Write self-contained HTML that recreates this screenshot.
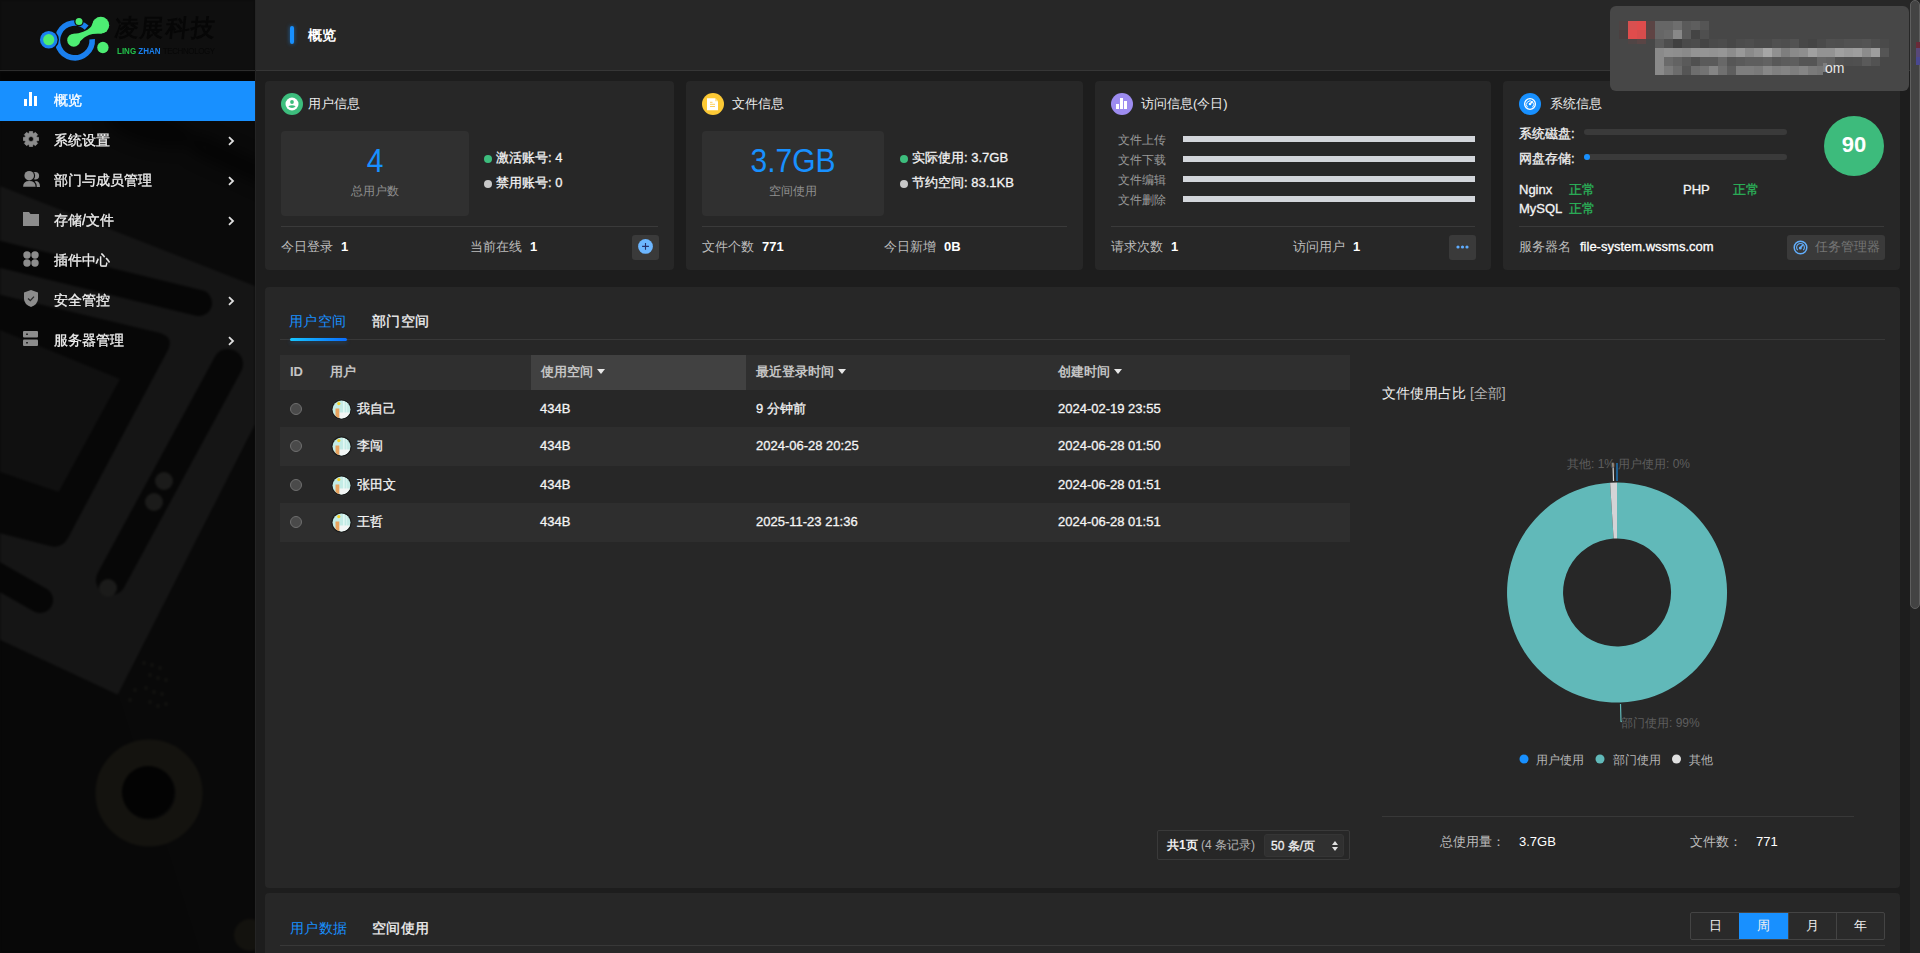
<!DOCTYPE html>
<html><head><meta charset="utf-8">
<style>
*{box-sizing:border-box;margin:0;padding:0}
html,body{width:1920px;height:953px;overflow:hidden}
body{background:#1d1d1d;font-family:"Liberation Sans",sans-serif;color:#e6e6e6;position:relative}
.a{position:absolute;white-space:nowrap}
#side{position:absolute;left:0;top:0;width:255px;height:953px;background:#0b0b0b;overflow:hidden}
#sideline{position:absolute;left:255px;top:0;width:1px;height:953px;background:#242424}
.mi{position:absolute;left:0;width:255px;height:40px}
.mi .t{position:absolute;left:54px;top:9px;font-size:14px;line-height:20px;color:#f0f0f0;-webkit-text-stroke-width:0.3px}
.mi .ic{position:absolute;left:23px;top:12px;width:16px;height:16px}
.mi .ch{position:absolute;left:226px;top:15px;width:10px;height:10px}
#hdr{position:absolute;left:256px;top:0;width:1664px;height:71px;background:#272727;border-bottom:1px solid #363636}
.card{position:absolute;top:81px;height:189px;background:#272727;border-radius:4px}
.panel{position:absolute;left:265px;width:1635px;background:#272727;border-radius:4px}
.ttl{position:absolute;top:13px;font-size:13px;line-height:20px;color:#ececec}
.circ{position:absolute;top:12px;width:22px;height:22px;border-radius:50%}
.stat{position:absolute;top:50px;height:85px;background:#303030;border-radius:4px}
.big{position:absolute;left:0;right:0;text-align:center;font-size:30px;line-height:36px;color:#1890ff;transform:scaleY(1.11);transform-origin:50% 28px}
.sub{position:absolute;left:0;right:0;text-align:center;font-size:12px;line-height:16px;color:#8f8f8f}
.div{position:absolute;top:145px;height:1px;background:#3a3a3a}
.ft{position:absolute;top:156px;font-size:13px;line-height:20px;color:#bdbdbd}
.ft b{color:#fff;font-weight:bold;margin-left:8px}
.dot{display:inline-block;width:8px;height:8px;border-radius:50%;margin-left:1px;margin-right:4px;vertical-align:-1px}
.kv{position:absolute;font-size:13px;line-height:20px;color:#f4f4f4;-webkit-text-stroke-width:0.3px}
.btn{position:absolute;top:154px;width:27px;height:25px;background:#3a3a3a;border-radius:3px}
.tx{top:9px;font-size:13px;line-height:20px;color:#f4f4f4;-webkit-text-stroke-width:0.3px}
.th{top:7px;font-size:13px;line-height:20px;color:#c4c4c4;font-weight:bold}
.tri{display:inline-block;width:0;height:0;border-left:4px solid transparent;border-right:4px solid transparent;border-top:5px solid #e8e8e8;margin-left:4px;vertical-align:2px}
.seg{top:0;height:26px;font-size:13px;line-height:26px;text-align:center;color:#f0f0f0}
</style></head><body>

<div id="side">
  <svg class="a" style="left:0;top:0" width="255" height="953" viewBox="0 0 255 953"><defs><filter id="bl" x="-5%" y="-5%" width="110%" height="110%" color-interpolation-filters="sRGB"><feGaussianBlur stdDeviation="1.2" color-interpolation-filters="sRGB"/></filter><filter id="bl2" x="-50%" y="-50%" width="200%" height="200%" color-interpolation-filters="sRGB"><feGaussianBlur stdDeviation="7"/></filter></defs><g filter="url(#bl)">
<rect x="0" y="0" width="255" height="953" fill="#0a0a0a"/>
<rect x="0" y="0" width="255" height="71" fill="#0f0f0f"/><rect x="0" y="71" width="255" height="12" fill="#050505"/>
<g filter="url(#bl2)"><ellipse cx="150" cy="128" rx="45" ry="16" fill="#050505" transform="rotate(15 150 128)"/><line x1="200" y1="145" x2="275" y2="180" stroke="#050505" stroke-width="22" stroke-linecap="round"/></g><polygon points="0,186 255,286 255,425 118,695 0,640" fill="#151515"/>
<line x1="-30" y1="247" x2="199" y2="303" stroke="#060606" stroke-width="26" stroke-linecap="round"/>
<path d="M-20 290 L160 333 Q174 337 168 350 L68 538 Q62 549 50 546 L-20 528 Z" fill="#070707"/>
<polygon points="0,330 120,379 58.6,492 0,472" fill="#101010"/>
<line x1="228" y1="364" x2="111" y2="580" stroke="#070707" stroke-width="30" stroke-linecap="round"/>
<circle cx="164" cy="481" r="9" fill="#1b1b1a"/>
<circle cx="154" cy="502" r="9" fill="#1b1b1a"/>
<circle cx="108" cy="588" r="9" fill="#1b1b1a"/>
<line x1="-30" y1="560" x2="40" y2="600" stroke="#060606" stroke-width="26" stroke-linecap="round"/>
<polygon points="0,640 118,695 255,425 255,953 0,953" fill="#080808"/><polygon points="118,695 255,425 255,953 200,953" fill="#090909"/>

<circle cx="149" cy="793" r="40" fill="none" stroke="#14130f" stroke-width="27"/>
<circle cx="148" cy="792" r="26" fill="#030303"/>
<circle cx="250" cy="935" r="16" fill="#13120e"/>
<circle cx="144" cy="663" r="2" fill="#121210"/><circle cx="152" cy="665" r="2" fill="#121210"/><circle cx="160" cy="668" r="2" fill="#121210"/><circle cx="150" cy="675" r="2" fill="#121210"/><circle cx="158" cy="678" r="2" fill="#121210"/><circle cx="166" cy="680" r="2" fill="#121210"/><circle cx="135" cy="690" r="2" fill="#121210"/><circle cx="146" cy="688" r="2" fill="#121210"/><circle cx="154" cy="692" r="2" fill="#121210"/><circle cx="162" cy="694" r="2" fill="#121210"/><circle cx="130" cy="700" r="2" fill="#121210"/><circle cx="150" cy="702" r="2" fill="#121210"/><circle cx="158" cy="706" r="2" fill="#121210"/><circle cx="166" cy="704" r="2" fill="#121210"/></g></svg>
  <!-- logo -->
  <svg class="a" style="left:30px;top:10px" width="100" height="60" viewBox="0 0 100 60">
    <path d="M 56.67 17.67 A 17.4 17.4 0 1 0 62.16 29.19" fill="none" stroke="#1a80ef" stroke-width="5.6"/>
    <circle cx="18.75" cy="29.7" r="10.2" fill="#0f0f0f"/>
    <circle cx="18.75" cy="29.7" r="8.8" fill="#1a80ef"/>
    <circle cx="18.75" cy="29.7" r="5.6" fill="#4ded73"/>
    <circle cx="49" cy="11.5" r="4.8" fill="#0f0f0f"/>
    <circle cx="49" cy="11.5" r="3.5" fill="#4ded73"/>
    <path d="M 43.75 23.7 C 50 23.5, 57 21, 61 16.7 C 62.5 14.5, 63 12, 64 10 L 72 23.6 C 66 23.5, 60 24, 56 26.4 C 53 28, 51.5 30, 49.5 32 Z" fill="#4ded73"/>
    <circle cx="70.8" cy="15.2" r="8.4" fill="#4ded73"/>
    <circle cx="43.75" cy="30.2" r="6.5" fill="#4ded73"/>
    <circle cx="72.9" cy="37.5" r="5.7" fill="#4ded73"/>
  </svg>
  <div class="a" style="left:115px;top:14px;font-size:24px;line-height:28px;font-weight:900;color:#060606;letter-spacing:1.2px;transform:skewX(-6deg)">凌展科技</div>
  <div class="a" style="left:117px;top:46px;font-size:8px;line-height:10px;transform:scaleY(1.12);transform-origin:0 0"><b style="color:#22c04a">LING</b> <b style="color:#1a80ef">ZHAN</b> <span style="color:#070707;letter-spacing:-0.4px">TECHNOLOGY</span></div>
  <div class="a" style="left:0;top:70px;width:255px;height:1px;background:#2c2c2c"></div>

  <div class="mi" style="top:81px;background:#1890ff">
    <svg class="ic" viewBox="0 0 16 16" style="top:10px"><rect x="1" y="8" width="3" height="7" fill="#fff"/><rect x="6" y="1" width="3" height="14" fill="#fff"/><rect x="11" y="5" width="3" height="10" fill="#fff"/></svg>
    <div class="t" style="color:#fff">概览</div>
  </div>
  <div class="mi" style="top:121px">
    <svg class="ic" viewBox="0 0 16 16" style="top:10px"><path fill="#8c8c8c" fill-rule="evenodd" stroke="#8c8c8c" stroke-width="0.6" stroke-linejoin="round" d="M5.95 2.36 L6.47 0.15 L9.53 0.15 L10.05 2.36 L10.54 2.56 L12.47 1.37 L14.63 3.53 L13.44 5.46 L13.64 5.95 L15.85 6.47 L15.85 9.53 L13.64 10.05 L13.44 10.54 L14.63 12.47 L12.47 14.63 L10.54 13.44 L10.05 13.64 L9.53 15.85 L6.47 15.85 L5.95 13.64 L5.46 13.44 L3.53 14.63 L1.37 12.47 L2.56 10.54 L2.36 10.05 L0.15 9.53 L0.15 6.47 L2.36 5.95 L2.56 5.46 L1.37 3.53 L3.53 1.37 L5.46 2.56Z M8 5.5 A2.5 2.5 0 1 0 8 10.5 A2.5 2.5 0 1 0 8 5.5Z"/></svg>
    <div class="t">系统设置</div>
    <svg class="ch" viewBox="0 0 10 10"><path d="M3 1.2 L7 5 L3 8.8" fill="none" stroke="#e0e0e0" stroke-width="1.8"/></svg>
  </div>
  <div class="mi" style="top:161px">
    <svg class="ic" viewBox="0 0 17 17" style="top:9px;width:17px;height:17px"><circle cx="12.3" cy="5.7" r="3.8" fill="#8c8c8c"/><path d="M10 17 Q10 11 13 11 Q17 11.5 17 17z" fill="#8c8c8c"/><circle cx="6.2" cy="5.7" r="5.9" fill="#0b0b0b"/><path d="M-1 17.5 Q-1 9.5 6.4 9.5 Q13.8 9.5 13.8 17.5z" fill="#0b0b0b"/><circle cx="6.2" cy="5.7" r="4.8" fill="#8c8c8c"/><path d="M0.1 16.8 Q0.1 10.9 6.35 10.9 Q12.6 10.9 12.6 16.8z" fill="#8c8c8c"/></svg>
    <div class="t">部门与成员管理</div>
    <svg class="ch" viewBox="0 0 10 10"><path d="M3 1.2 L7 5 L3 8.8" fill="none" stroke="#e0e0e0" stroke-width="1.8"/></svg>
  </div>
  <div class="mi" style="top:201px">
    <svg class="ic" viewBox="0 0 16 16" style="top:11px"><path d="M0 0 H6 L7.5 2 H16 V14 H0z" fill="#8c8c8c"/></svg>
    <div class="t">存储/文件</div>
    <svg class="ch" viewBox="0 0 10 10"><path d="M3 1.2 L7 5 L3 8.8" fill="none" stroke="#e0e0e0" stroke-width="1.8"/></svg>
  </div>
  <div class="mi" style="top:241px">
    <svg class="ic" viewBox="0 0 16 16" style="top:10px"><circle cx="4" cy="4" r="3.7" fill="#8c8c8c"/><circle cx="12" cy="4" r="3.7" fill="#8c8c8c"/><circle cx="4" cy="12" r="3.7" fill="#8c8c8c"/><circle cx="12" cy="12" r="3.7" fill="#8c8c8c"/></svg>
    <div class="t">插件中心</div>
  </div>
  <div class="mi" style="top:281px">
    <svg class="ic" viewBox="0 0 16 17" style="top:9px;height:17px"><path d="M1 2.5 L8 0 L15 2.5 V9 Q15 14 8 17 Q1 14 1 9z" fill="#8c8c8c"/><path d="M5 8.5 L7.3 10.6 L11 6.6" fill="none" stroke="#2a2a2a" stroke-width="1.3"/></svg>
    <div class="t">安全管控</div>
    <svg class="ch" viewBox="0 0 10 10"><path d="M3 1.2 L7 5 L3 8.8" fill="none" stroke="#e0e0e0" stroke-width="1.8"/></svg>
  </div>
  <div class="mi" style="top:321px">
    <svg class="ic" viewBox="0 0 15 15" style="top:10px;width:15px;height:15px"><rect x="0" y="0" width="15" height="6.5" rx="1" fill="#8c8c8c"/><rect x="0" y="8.5" width="15" height="6.5" rx="1" fill="#8c8c8c"/><rect x="3" y="2.5" width="2" height="1.5" fill="#2a2a2a"/><rect x="3" y="11" width="2" height="1.5" fill="#2a2a2a"/></svg>
    <div class="t">服务器管理</div>
    <svg class="ch" viewBox="0 0 10 10"><path d="M3 1.2 L7 5 L3 8.8" fill="none" stroke="#e0e0e0" stroke-width="1.8"/></svg>
  </div>
</div>
<div id="sideline"></div>

<!-- header -->
<div id="hdr">
  <div class="a" style="left:34px;top:26px;width:4px;height:18px;border-radius:2px;background:#1890ff;box-shadow:0 0 4px rgba(24,144,255,.6)"></div>
  <div class="a" style="left:52px;top:25px;font-size:14px;line-height:20px;color:#fff;font-weight:bold">概览</div>
</div>

<!-- CARDS -->

<div class="card" style="left:265px;width:409px">
  <div class="circ" style="left:16px;background:#3dbd7d">
    <svg width="22" height="22" viewBox="0 0 22 22"><circle cx="11" cy="11" r="6.5" fill="#fff"/><circle cx="11" cy="9" r="1.9" fill="#3dbd7d"/><path d="M7.3 13.3 Q11 11 14.7 13.3 Q13.5 15 11 15 Q8.5 15 7.3 13.3z" fill="#3dbd7d"/></svg>
  </div>
  <div class="ttl" style="left:43px">用户信息</div>
  <div class="stat" style="left:16px;width:188px">
    <div class="big" style="top:13px">4</div>
    <div class="sub" style="top:52px">总用户数</div>
  </div>
  <div class="kv" style="left:218px;top:67px"><span class="dot" style="background:#3dbd7d"></span>激活账号: 4</div>
  <div class="kv" style="left:218px;top:92px"><span class="dot" style="background:#c8c8c8"></span>禁用账号: 0</div>
  <div class="div" style="left:16px;width:377px"></div>
  <div class="ft" style="left:16px">今日登录<b>1</b></div>
  <div class="ft" style="left:205px">当前在线<b>1</b></div>
  <div class="btn" style="left:367px"><svg width="27" height="25" viewBox="0 0 27 25"><circle cx="13.5" cy="11.4" r="7.4" fill="#6cb6ff"/><path d="M13.5 8v6.8M10.1 11.4h6.8" stroke="#26306a" stroke-width="1.1"/></svg></div>
</div>

<div class="card" style="left:686px;width:397px">
  <div class="circ" style="left:16px;background:#fcc935">
    <svg width="22" height="22" viewBox="0 0 22 22"><path d="M5 5.3h8l3 3v9h-11z" fill="#fff"/><path d="M13 5.3v3h3" fill="#fde7a0"/><path d="M8 9.3h2.5M8 11.3h5M8 13.5h5" stroke="#fcd060" stroke-width="1"/></svg>
  </div>
  <div class="ttl" style="left:46px">文件信息</div>
  <div class="stat" style="left:16px;width:182px">
    <div class="big" style="top:13px">3.7GB</div>
    <div class="sub" style="top:52px">空间使用</div>
  </div>
  <div class="kv" style="left:213px;top:67px"><span class="dot" style="background:#3dbd7d"></span>实际使用: 3.7GB</div>
  <div class="kv" style="left:213px;top:92px"><span class="dot" style="background:#c8c8c8"></span>节约空间: 83.1KB</div>
  <div class="div" style="left:16px;width:365px"></div>
  <div class="ft" style="left:16px">文件个数<b>771</b></div>
  <div class="ft" style="left:198px">今日新增<b>0B</b></div>
</div>

<div class="card" style="left:1095px;width:396px">
  <div class="circ" style="left:16px;background:#9d8cf0">
    <svg width="22" height="22" viewBox="0 0 22 22"><rect x="5" y="11" width="3" height="5" fill="#fff"/><rect x="9" y="5" width="3" height="11" fill="#fff"/><rect x="13" y="8" width="3" height="8" fill="#fff"/></svg>
  </div>
  <div class="ttl" style="left:46px">访问信息(今日)</div>
  <div class="a" style="left:23px;top:49px;font-size:12px;line-height:20px;color:#9a9a9a">文件上传</div>
  <div class="a" style="left:23px;top:69px;font-size:12px;line-height:20px;color:#9a9a9a">文件下载</div>
  <div class="a" style="left:23px;top:89px;font-size:12px;line-height:20px;color:#9a9a9a">文件编辑</div>
  <div class="a" style="left:23px;top:109px;font-size:12px;line-height:20px;color:#9a9a9a">文件删除</div>
  <div class="a" style="left:88px;top:55px;width:292px;height:6px;background:#d3d6db"></div>
  <div class="a" style="left:88px;top:75px;width:292px;height:6px;background:#d3d6db"></div>
  <div class="a" style="left:88px;top:95px;width:292px;height:6px;background:#d3d6db"></div>
  <div class="a" style="left:88px;top:115px;width:292px;height:6px;background:#d3d6db"></div>
  <div class="div" style="left:16px;width:364px"></div>
  <div class="ft" style="left:16px">请求次数<b>1</b></div>
  <div class="ft" style="left:198px">访问用户<b>1</b></div>
  <div class="btn" style="left:354px"><svg width="27" height="25" viewBox="0 0 27 25"><circle cx="9" cy="12" r="1.6" fill="#5eacff"/><circle cx="13.5" cy="12" r="1.6" fill="#5eacff"/><circle cx="18" cy="12" r="1.6" fill="#5eacff"/></svg></div>
</div>

<div class="card" style="left:1503px;width:397px">
  <div class="circ" style="left:16px;background:#1890ff">
    <svg width="22" height="22" viewBox="0 0 22 22"><circle cx="11" cy="11" r="5.4" fill="none" stroke="#fff" stroke-width="1.3"/><path d="M8.6 14.2 A3.6 3.6 0 1 1 13.4 14.2" fill="none" stroke="#fff" stroke-width="0.9"/><path d="M11 11 L13.6 8.2" stroke="#fff" stroke-width="1.5"/><circle cx="11" cy="11" r="1.3" fill="#fff"/></svg>
  </div>
  <div class="ttl" style="left:47px">系统信息</div>
  <div class="kv" style="left:16px;top:43px;color:#f2f2f2">系统磁盘:</div>
  <div class="kv" style="left:16px;top:68px;color:#f2f2f2">网盘存储:</div>
  <div class="a" style="left:81px;top:48px;width:203px;height:6px;border-radius:3px;background:#3a3a3a"></div>
  <div class="a" style="left:81px;top:73px;width:203px;height:6px;border-radius:3px;background:#3a3a3a"></div>
  <div class="a" style="left:81px;top:73px;width:6px;height:6px;border-radius:3px;background:#1890ff"></div>
  <div class="a" style="left:321px;top:35px;width:60px;height:60px;border-radius:50%;background:#3dbb7c;color:#fff;font-weight:bold;font-size:22px;line-height:58px;text-align:center">90</div>
  <div class="kv" style="left:16px;top:99px">Nginx</div><div class="kv" style="left:66px;top:99px;color:#2bb45a">正常</div>
  <div class="kv" style="left:180px;top:99px">PHP</div><div class="kv" style="left:230px;top:99px;color:#2bb45a">正常</div>
  <div class="kv" style="left:16px;top:118px">MySQL</div><div class="kv" style="left:66px;top:118px;color:#2bb45a">正常</div>
  <div class="div" style="left:16px;width:365px"></div>
  <div class="ft" style="left:16px">服务器名<b style="margin-left:9px;font-weight:normal;-webkit-text-stroke-width:0.3px">file-system.wssms.com</b></div>
  <div class="a" style="left:284px;top:154px;width:98px;height:25px;background:#3a3a3a;border-radius:3px">
    <svg class="a" style="left:5px;top:4px" width="17" height="17" viewBox="0 0 17 17"><circle cx="8.5" cy="8.5" r="6.3" fill="none" stroke="#62aefc" stroke-width="1.5"/><path d="M5.8 11.2 A3.9 3.9 0 1 1 11.2 11.2" fill="none" stroke="#62aefc" stroke-width="1.1"/><path d="M8.3 8.8 L10.8 6" stroke="#62aefc" stroke-width="1.5"/><circle cx="8.3" cy="8.9" r="1.5" fill="#62aefc"/></svg>
    <div class="a" style="left:28px;top:2px;font-size:13px;line-height:20px;color:#757575">任务管理器</div>
  </div>
</div>


<!-- PANEL 2 -->
<div class="panel" style="top:287px;height:601px" id="p2">
  <div class="a" style="left:24px;top:24px;font-size:14px;line-height:20px;color:#1890ff;letter-spacing:0.4px">用户空间</div>
  <div class="a" style="left:107px;top:24px;font-size:14px;line-height:20px;color:#f4f4f4;letter-spacing:0.4px;-webkit-text-stroke-width:0.3px">部门空间</div>
  <div class="a" style="left:15px;top:52px;width:1605px;height:1px;background:#383838"></div>
  <div class="a" style="left:25px;top:51px;width:57px;height:3px;border-radius:2px;background:linear-gradient(90deg,#17c6ff,#0a6dff);box-shadow:0 2px 4px rgba(24,144,255,.25)"></div>
  <div class="a" style="left:15px;top:68px;width:1070px;height:35px;background:#2f2f2f">
    <div class="a" style="left:251px;top:0;width:215px;height:35px;background:#414141"></div>
    <div class="a th" style="left:10px">ID</div>
    <div class="a th" style="left:50px">用户</div>
    <div class="a th" style="left:261px">使用空间<i class="tri"></i></div>
    <div class="a th" style="left:476px">最近登录时间<i class="tri"></i></div>
    <div class="a th" style="left:778px">创建时间<i class="tri"></i></div>
  </div>
  <div class="a" style="left:15px;top:103px;width:1070px;height:37px;background:#272727">
    <div class="a" style="left:10px;top:13px;width:12px;height:12px;border-radius:50%;background:#4a4a4a;border:1px solid #6e6e6e"></div>
    <svg class="a" style="left:50px;top:7.5px" width="23" height="23" viewBox="0 0 23 23"><defs><clipPath id="av0"><circle cx="11.5" cy="11.5" r="9"/></clipPath></defs><circle cx="11.5" cy="11.5" r="10.6" fill="#1b1b1b" stroke="#323232" stroke-width="0.6"/><g clip-path="url(#av0)"><rect x="2" y="2" width="19" height="19" fill="#c4ece6"/><rect x="13" y="2" width="1.6" height="19" fill="#e2f7f3"/><rect x="16" y="2" width="1.2" height="19" fill="#d8f3ef"/><rect x="9.3" y="14.5" width="12" height="8" fill="#f3f6f5"/><rect x="5.5" y="10.5" width="3.8" height="10" fill="#e8a35f"/><circle cx="8.8" cy="5.6" r="1.6" fill="#f5d327"/></g></svg>
    <div class="a tx" style="left:77px">我自己</div>
    <div class="a tx" style="left:260px">434B</div>
    <div class="a tx" style="left:476px">9 分钟前</div>
    <div class="a tx" style="left:778px">2024-02-19 23:55</div>
  </div><div class="a" style="left:15px;top:140px;width:1070px;height:39px;background:#2e2e2e">
    <div class="a" style="left:10px;top:13px;width:12px;height:12px;border-radius:50%;background:#4a4a4a;border:1px solid #6e6e6e"></div>
    <svg class="a" style="left:50px;top:7.5px" width="23" height="23" viewBox="0 0 23 23"><defs><clipPath id="av1"><circle cx="11.5" cy="11.5" r="9"/></clipPath></defs><circle cx="11.5" cy="11.5" r="10.6" fill="#1b1b1b" stroke="#323232" stroke-width="0.6"/><g clip-path="url(#av1)"><rect x="2" y="2" width="19" height="19" fill="#c4ece6"/><rect x="13" y="2" width="1.6" height="19" fill="#e2f7f3"/><rect x="16" y="2" width="1.2" height="19" fill="#d8f3ef"/><rect x="9.3" y="14.5" width="12" height="8" fill="#f3f6f5"/><rect x="5.5" y="10.5" width="3.8" height="10" fill="#e8a35f"/><circle cx="8.8" cy="5.6" r="1.6" fill="#f5d327"/></g></svg>
    <div class="a tx" style="left:77px">李闯</div>
    <div class="a tx" style="left:260px">434B</div>
    <div class="a tx" style="left:476px">2024-06-28 20:25</div>
    <div class="a tx" style="left:778px">2024-06-28 01:50</div>
  </div><div class="a" style="left:15px;top:179px;width:1070px;height:37px;background:#272727">
    <div class="a" style="left:10px;top:13px;width:12px;height:12px;border-radius:50%;background:#4a4a4a;border:1px solid #6e6e6e"></div>
    <svg class="a" style="left:50px;top:7.5px" width="23" height="23" viewBox="0 0 23 23"><defs><clipPath id="av2"><circle cx="11.5" cy="11.5" r="9"/></clipPath></defs><circle cx="11.5" cy="11.5" r="10.6" fill="#1b1b1b" stroke="#323232" stroke-width="0.6"/><g clip-path="url(#av2)"><rect x="2" y="2" width="19" height="19" fill="#c4ece6"/><rect x="13" y="2" width="1.6" height="19" fill="#e2f7f3"/><rect x="16" y="2" width="1.2" height="19" fill="#d8f3ef"/><rect x="9.3" y="14.5" width="12" height="8" fill="#f3f6f5"/><rect x="5.5" y="10.5" width="3.8" height="10" fill="#e8a35f"/><circle cx="8.8" cy="5.6" r="1.6" fill="#f5d327"/></g></svg>
    <div class="a tx" style="left:77px">张田文</div>
    <div class="a tx" style="left:260px">434B</div>
    <div class="a tx" style="left:476px"></div>
    <div class="a tx" style="left:778px">2024-06-28 01:51</div>
  </div><div class="a" style="left:15px;top:216px;width:1070px;height:39px;background:#2e2e2e">
    <div class="a" style="left:10px;top:13px;width:12px;height:12px;border-radius:50%;background:#4a4a4a;border:1px solid #6e6e6e"></div>
    <svg class="a" style="left:50px;top:7.5px" width="23" height="23" viewBox="0 0 23 23"><defs><clipPath id="av3"><circle cx="11.5" cy="11.5" r="9"/></clipPath></defs><circle cx="11.5" cy="11.5" r="10.6" fill="#1b1b1b" stroke="#323232" stroke-width="0.6"/><g clip-path="url(#av3)"><rect x="2" y="2" width="19" height="19" fill="#c4ece6"/><rect x="13" y="2" width="1.6" height="19" fill="#e2f7f3"/><rect x="16" y="2" width="1.2" height="19" fill="#d8f3ef"/><rect x="9.3" y="14.5" width="12" height="8" fill="#f3f6f5"/><rect x="5.5" y="10.5" width="3.8" height="10" fill="#e8a35f"/><circle cx="8.8" cy="5.6" r="1.6" fill="#f5d327"/></g></svg>
    <div class="a tx" style="left:77px">王哲</div>
    <div class="a tx" style="left:260px">434B</div>
    <div class="a tx" style="left:476px">2025-11-23 21:36</div>
    <div class="a tx" style="left:778px">2024-06-28 01:51</div>
  </div>
  <div class="a" style="left:892px;top:543px;width:193px;height:30px;border:1px solid #3a3a3a;border-radius:2px">
    <div class="a" style="left:9px;top:4px;font-size:12px;line-height:20px;color:#f0f0f0"><b>共1页</b> <span style="color:#b5b5b5">(4 条记录)</span></div>
    <div class="a" style="left:106px;top:3px;width:80px;height:23px;background:#303030;border:1px solid #353535;border-radius:3px">
      <div class="a" style="left:6px;top:1px;font-size:12px;line-height:20px;color:#f0f0f0;-webkit-text-stroke-width:0.3px">50 条/页</div>
      <svg class="a" style="left:66px;top:5px" width="8" height="12" viewBox="0 0 8 12"><path d="M4 1 L7 5 H1z M4 11 L7 7 H1z" fill="#e0e0e0"/></svg>
    </div>
  </div>

  <div class="a" style="left:1117px;top:96px;font-size:14px;line-height:20px;color:#f0f0f0">文件使用占比 <span style="color:#b0b0b0">[全部]</span></div>
  <svg class="a" style="left:1117px;top:160px" width="500" height="360" viewBox="1382 447 500 360" id="donut"><path d="M1617.00 482.50 A110 110 0 1 1 1610.09 482.72 L1613.61 538.61 A54 54 0 1 0 1617.00 538.50Z" fill="#61b9b9"/><path d="M1610.09 482.72 A110 110 0 0 1 1617.00 482.50 L1617.00 538.50 A54 54 0 0 0 1613.61 538.61Z" fill="#d3d3d6"/><path d="M1617 481 V463" stroke="#1a86d8" stroke-width="1.2"/><path d="M1613.5 481 L1613 463" stroke="#d8d8d8" stroke-width="1.2"/><path d="M1620.5 704 L1621 721.5 H1622" stroke="#61b9b9" stroke-width="1.2" fill="none"/><text x="1567" y="468" font-size="12" fill="#5e5e5e" font-family="Liberation Sans">其他: 1%</text><text x="1618" y="468" font-size="12" fill="#5e5e5e" font-family="Liberation Sans">用户使用: 0%</text><text x="1621" y="727" font-size="12" fill="#5e5e5e" font-family="Liberation Sans">部门使用: 99%</text><circle cx="1524" cy="759" r="4.5" fill="#1890ff"/><text x="1536" y="764" font-size="12" fill="#b5b5b5" font-family="Liberation Sans">用户使用</text><circle cx="1600" cy="759" r="4.5" fill="#61b9b9"/><text x="1612.5" y="764" font-size="12" fill="#b5b5b5" font-family="Liberation Sans">部门使用</text><circle cx="1676.5" cy="759" r="4.5" fill="#e0e0e0"/><text x="1689" y="764" font-size="12" fill="#b5b5b5" font-family="Liberation Sans">其他</text></svg>
  <div class="a" style="left:1117px;top:529px;width:472px;height:1px;background:#383838"></div>
  <div class="a" style="left:1175px;top:545px;font-size:13px;line-height:20px;color:#bdbdbd">总使用量：</div>
  <div class="a" style="left:1254px;top:545px;font-size:13px;line-height:20px;color:#fff">3.7GB</div>
  <div class="a" style="left:1425px;top:545px;font-size:13px;line-height:20px;color:#bdbdbd">文件数：</div>
  <div class="a" style="left:1491px;top:545px;font-size:13px;line-height:20px;color:#fff">771</div>
</div>

<!-- PANEL 3 -->
<div class="panel" style="top:893px;height:80px" id="p3">
  <div class="a" style="left:25px;top:25px;font-size:14px;line-height:20px;color:#1890ff;letter-spacing:0.4px">用户数据</div>
  <div class="a" style="left:107px;top:25px;font-size:14px;line-height:20px;color:#f4f4f4;letter-spacing:0.4px;-webkit-text-stroke-width:0.3px">空间使用</div>
  <div class="a" style="left:15px;top:52px;width:1605px;height:1px;background:#383838"></div>
  <div class="a" style="left:1425px;top:19px;width:195px;height:28px;border:1px solid #444;border-radius:2px;background:#2a2a2a">
    <div class="a seg" style="left:0;width:48px">日</div>
    <div class="a seg" style="left:48px;width:49px;background:#1890ff">周</div>
    <div class="a seg" style="left:97px;width:48px;border-left:1px solid #444">月</div>
    <div class="a seg" style="left:145px;width:48px;border-left:1px solid #444">年</div>
  </div>
</div>

<div class="a" style="left:1610px;top:6px;width:299px;height:85px;background:#474747;border-radius:6px;overflow:hidden">
<svg class="a" style="left:0;top:0" width="299" height="85" viewBox="0 0 299 85"><rect x="9" y="15" width="9" height="9" fill="#4d4343"/><rect x="18" y="15" width="9" height="9" fill="#d85050"/><rect x="27" y="15" width="9" height="9" fill="#e04c4c"/><rect x="36" y="15" width="9" height="9" fill="#5a4444"/><rect x="45" y="15" width="9" height="9" fill="#666666"/><rect x="54" y="15" width="9" height="9" fill="#666666"/><rect x="63" y="15" width="9" height="9" fill="#6e6e6e"/><rect x="72" y="15" width="9" height="9" fill="#5a5a5a"/><rect x="81" y="15" width="9" height="9" fill="#5e5e5e"/><rect x="90" y="15" width="9" height="9" fill="#555555"/><rect x="9" y="24" width="9" height="9" fill="#4a4040"/><rect x="18" y="24" width="9" height="9" fill="#e04c4c"/><rect x="27" y="24" width="9" height="9" fill="#d84c4c"/><rect x="36" y="24" width="9" height="9" fill="#604444"/><rect x="45" y="24" width="9" height="9" fill="#666666"/><rect x="54" y="24" width="9" height="9" fill="#6a6a6a"/><rect x="63" y="24" width="9" height="9" fill="#888888"/><rect x="72" y="24" width="9" height="9" fill="#5a5a5a"/><rect x="81" y="24" width="9" height="9" fill="#444444"/><rect x="90" y="24" width="9" height="9" fill="#4f4f4f"/><rect x="18" y="33" width="9" height="5" fill="#504545"/><rect x="27" y="33" width="9" height="5" fill="#5a4545"/><rect x="45" y="33" width="9" height="9" fill="#5a5a5a"/><rect x="54" y="33" width="9" height="9" fill="#4e4e4e"/><rect x="63" y="33" width="9" height="9" fill="#404040"/><rect x="72" y="33" width="9" height="9" fill="#4a4a4a"/><rect x="81" y="33" width="9" height="9" fill="#4c4c4c"/><rect x="90" y="33" width="9" height="9" fill="#444444"/><rect x="99" y="33" width="9" height="9" fill="#4a4a4a"/><rect x="108" y="33" width="9" height="9" fill="#4c4c4c"/><rect x="117" y="33" width="9" height="9" fill="#474747"/><rect x="126" y="33" width="9" height="9" fill="#4c4c4c"/><rect x="135" y="33" width="9" height="9" fill="#4e4e4e"/><rect x="144" y="33" width="9" height="9" fill="#4a4a4a"/><rect x="153" y="33" width="9" height="9" fill="#4a4a4a"/><rect x="162" y="33" width="9" height="9" fill="#505050"/><rect x="171" y="33" width="9" height="9" fill="#4e4e4e"/><rect x="180" y="33" width="9" height="9" fill="#525252"/><rect x="189" y="33" width="9" height="9" fill="#474747"/><rect x="198" y="33" width="9" height="9" fill="#444444"/><rect x="207" y="33" width="9" height="9" fill="#4a4a4a"/><rect x="216" y="33" width="9" height="9" fill="#505050"/><rect x="225" y="33" width="9" height="9" fill="#4f4f4f"/><rect x="234" y="33" width="9" height="9" fill="#525252"/><rect x="243" y="33" width="9" height="9" fill="#525252"/><rect x="252" y="33" width="9" height="9" fill="#545454"/><rect x="261" y="33" width="9" height="9" fill="#4e4e4e"/><rect x="270" y="33" width="9" height="9" fill="#4a4a4a"/><rect x="45" y="42" width="9" height="9" fill="#8a8a8a"/><rect x="54" y="42" width="9" height="9" fill="#909090"/><rect x="63" y="42" width="9" height="9" fill="#8e8e8e"/><rect x="72" y="42" width="9" height="9" fill="#8a8a8a"/><rect x="81" y="42" width="9" height="9" fill="#939393"/><rect x="90" y="42" width="9" height="9" fill="#959595"/><rect x="99" y="42" width="9" height="9" fill="#939393"/><rect x="108" y="42" width="9" height="9" fill="#969696"/><rect x="117" y="42" width="9" height="9" fill="#8c8c8c"/><rect x="126" y="42" width="9" height="9" fill="#999999"/><rect x="135" y="42" width="9" height="9" fill="#8a8a8a"/><rect x="144" y="42" width="9" height="9" fill="#939393"/><rect x="153" y="42" width="9" height="9" fill="#a6a6a6"/><rect x="162" y="42" width="9" height="9" fill="#909090"/><rect x="171" y="42" width="9" height="9" fill="#7e7e7e"/><rect x="180" y="42" width="9" height="9" fill="#8a8a8a"/><rect x="189" y="42" width="9" height="9" fill="#8e8e8e"/><rect x="198" y="42" width="9" height="9" fill="#a0a0a0"/><rect x="207" y="42" width="9" height="9" fill="#939393"/><rect x="216" y="42" width="9" height="9" fill="#939393"/><rect x="225" y="42" width="9" height="9" fill="#a0a0a0"/><rect x="234" y="42" width="9" height="9" fill="#9a9a9a"/><rect x="243" y="42" width="9" height="9" fill="#9e9e9e"/><rect x="252" y="42" width="9" height="9" fill="#8c8c8c"/><rect x="261" y="42" width="9" height="9" fill="#9e9e9e"/><rect x="270" y="42" width="9" height="9" fill="#555555"/><rect x="45" y="51" width="9" height="9" fill="#8a8a8a"/><rect x="54" y="51" width="9" height="9" fill="#6a6a6a"/><rect x="63" y="51" width="9" height="9" fill="#636363"/><rect x="72" y="51" width="9" height="9" fill="#5a5a5a"/><rect x="81" y="51" width="9" height="9" fill="#505050"/><rect x="90" y="51" width="9" height="9" fill="#5a5a5a"/><rect x="99" y="51" width="9" height="9" fill="#5a5a5a"/><rect x="108" y="51" width="9" height="9" fill="#686868"/><rect x="117" y="51" width="9" height="9" fill="#565656"/><rect x="126" y="51" width="9" height="9" fill="#5a5a5a"/><rect x="135" y="51" width="9" height="9" fill="#5e5e5e"/><rect x="144" y="51" width="9" height="9" fill="#5e5e5e"/><rect x="153" y="51" width="9" height="9" fill="#626262"/><rect x="162" y="51" width="9" height="9" fill="#585858"/><rect x="171" y="51" width="9" height="9" fill="#5c5c5c"/><rect x="180" y="51" width="9" height="9" fill="#5e5e5e"/><rect x="189" y="51" width="9" height="9" fill="#555555"/><rect x="198" y="51" width="9" height="9" fill="#555555"/><rect x="207" y="51" width="9" height="9" fill="#666666"/><rect x="216" y="51" width="9" height="9" fill="#636363"/><rect x="225" y="51" width="9" height="9" fill="#525252"/><rect x="234" y="51" width="9" height="9" fill="#4f4f4f"/><rect x="243" y="51" width="9" height="9" fill="#505050"/><rect x="252" y="51" width="9" height="9" fill="#5a5a5a"/><rect x="261" y="51" width="9" height="9" fill="#525252"/><rect x="45" y="60" width="9" height="9" fill="#8a8a8a"/><rect x="54" y="60" width="9" height="9" fill="#7a7a7a"/><rect x="63" y="60" width="9" height="9" fill="#6c6c6c"/><rect x="72" y="60" width="9" height="9" fill="#555555"/><rect x="81" y="60" width="9" height="9" fill="#6e6e6e"/><rect x="90" y="60" width="9" height="9" fill="#737373"/><rect x="99" y="60" width="9" height="9" fill="#858585"/><rect x="108" y="60" width="9" height="9" fill="#707070"/><rect x="117" y="60" width="9" height="9" fill="#5e5e5e"/><rect x="126" y="60" width="9" height="9" fill="#7e7e7e"/><rect x="135" y="60" width="9" height="9" fill="#7e7e7e"/><rect x="144" y="60" width="9" height="9" fill="#7a7a7a"/><rect x="153" y="60" width="9" height="9" fill="#888888"/><rect x="162" y="60" width="9" height="9" fill="#808080"/><rect x="171" y="60" width="9" height="9" fill="#848484"/><rect x="180" y="60" width="9" height="9" fill="#7e7e7e"/><rect x="189" y="60" width="9" height="9" fill="#858585"/><rect x="198" y="60" width="9" height="9" fill="#7a7a7a"/><rect x="207" y="60" width="6" height="9" fill="#767676"/>
<rect x="213" y="57" width="4" height="9" fill="#7e7e7e"/><text x="215" y="66.5" font-size="14" fill="#e8e8e8" font-family="Liberation Sans">om</text></svg></div>
<div class="a" style="left:1910px;top:0;width:10px;height:953px;background:#242424"></div>
<div class="a" style="left:1910px;top:0;width:10px;height:609px;background:#434343;border:1px solid #5e5e5e;border-radius:5px"></div><div class="a" style="left:1916px;top:42px;width:4px;height:6px;background:#6a2a38"></div><div class="a" style="left:1916px;top:48px;width:4px;height:9px;background:#584878"></div><div class="a" style="left:1916px;top:57px;width:4px;height:8px;background:#4a4890"></div>
</body></html>
